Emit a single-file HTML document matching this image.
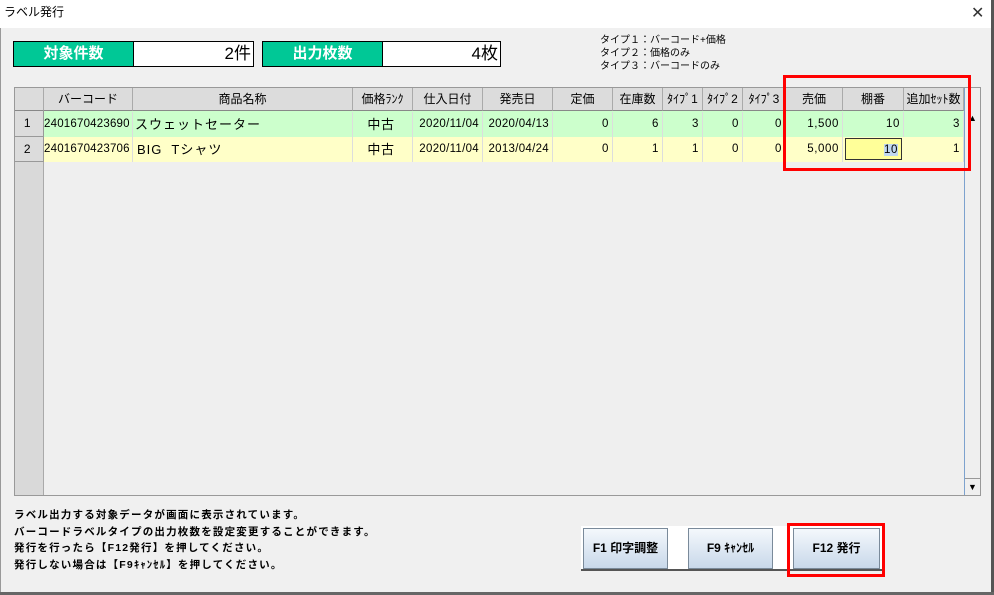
<!DOCTYPE html>
<html><head><meta charset="utf-8"><style>
*{margin:0;padding:0;box-sizing:border-box}
body{width:994px;height:595px;background:#f0f0f0;font-family:"Liberation Sans","Noto Sans CJK JP",sans-serif;position:relative;overflow:hidden;color:#000}
.a{position:absolute}
.title{left:0;top:0;width:994px;height:28px;background:#fff;font-size:12px;line-height:24px;padding-left:4px}
.lbl{background:#00c896;color:#fff;font-weight:bold;font-size:15px;text-align:center;line-height:23px;border:1px solid #000}
.val{background:#fff;border:1px solid #000;border-left:none;text-align:right;font-size:17px;line-height:23px;padding-right:2px}
.legend{font-size:10px;line-height:13px;left:600px;top:34px}
.grid{left:14px;top:87px;width:967px;height:409px;border:1px solid #999;background:#efefef}
.hd{top:88px;height:23px;background:#dcdcdc;border-right:1px solid #aaa;border-bottom:1px solid #888;font-size:12px;text-align:center;line-height:22px;overflow:hidden;white-space:nowrap}
.c{height:25px;font-size:11.5px;line-height:25px;text-align:right;padding-right:3px;border-right:1px solid #ddd;white-space:nowrap;overflow:hidden;letter-spacing:.6px}
.g{background:#ccffcc}.y{background:#ffffc8}
.rn{left:15px;width:29px;background:#dcdcdc;text-align:center;font-size:12px;border-bottom:1px solid #999;border-right:1px solid #999}
.red{border:3px solid #f00}
.help{left:14px;top:507px;font-size:10.5px;line-height:16.5px;font-weight:bold;letter-spacing:1.2px}
.btn{top:528px;height:41px;background:linear-gradient(#f4f8fc,#c8d8ea);border:1px solid #7a8a9a;font-size:12px;font-weight:bold;text-align:center;line-height:39px}
</style></head><body>
<div class="a title">ラベル発行<span class="a" style="left:971px;top:0;font-size:16px;line-height:28px;color:#333">✕</span></div>
<div class="a" style="left:991px;top:0;width:3px;height:595px;background:#555"></div>
<div class="a" style="left:0;top:28px;width:1px;height:567px;background:#999"></div>
<div class="a lbl" style="left:13px;top:41px;width:121px;height:26px">対象件数</div>
<div class="a val" style="left:134px;top:41px;width:120px;height:26px">2件</div>
<div class="a lbl" style="left:262px;top:41px;width:121px;height:26px">出力枚数</div>
<div class="a val" style="left:383px;top:41px;width:118px;height:26px">4枚</div>
<div class="a legend">タイプ１：バーコード+価格<br>タイプ２：価格のみ<br>タイプ３：バーコードのみ</div>
<div class="a grid"></div>
<div class="a" style="left:15px;top:88px;width:29px;height:407px;background:#d9d9d9;border-right:1px solid #aaa"></div>
<div class="a" style="left:964px;top:88px;width:16px;height:407px;background:#efefef;border-left:1px solid #7da2ce"></div>
<div class="a" style="left:965px;top:478px;width:15px;height:16px;font-size:9px;text-align:center;line-height:16px;border-top:1px solid #999">▼</div>
<div class="a" style="left:965px;top:110px;width:15px;height:20px;font-size:9px;text-align:center;line-height:16px">▲</div>
<div class="a hd" style="left:15px;width:29px"></div>
<div class="a hd" style="left:44px;width:89px">バーコード</div>
<div class="a hd" style="left:133px;width:220px">商品名称</div>
<div class="a hd" style="left:353px;width:60px">価格ﾗﾝｸ</div>
<div class="a hd" style="left:413px;width:70px">仕入日付</div>
<div class="a hd" style="left:483px;width:70px">発売日</div>
<div class="a hd" style="left:553px;width:60px">定価</div>
<div class="a hd" style="left:613px;width:50px">在庫数</div>
<div class="a hd" style="left:663px;width:40px">ﾀｲﾌﾟ1</div>
<div class="a hd" style="left:703px;width:40px">ﾀｲﾌﾟ2</div>
<div class="a hd" style="left:743px;width:43px">ﾀｲﾌﾟ3</div>
<div class="a hd" style="left:786px;width:57px">売価</div>
<div class="a hd" style="left:843px;width:61px">棚番</div>
<div class="a hd" style="left:904px;width:60px">追加ｾｯﾄ数</div>

<div class="a c rn" style="top:111px;height:26px">1</div>
<div class="a c rn" style="top:137px;height:25px">2</div>
<div class="a g" style="left:44px;top:111px;width:920px;height:26px"></div>
<div class="a y" style="left:44px;top:137px;width:920px;height:25px"></div>

<div class="a c" style="top:112px;left:44px;width:89px;letter-spacing:.2px">2401670423690</div>
<div class="a c" style="top:112px;left:133px;width:220px;text-align:left;padding-left:2px;font-size:13px;letter-spacing:1px">スウェットセーター</div>
<div class="a c" style="top:112px;left:353px;width:60px;text-align:center;font-size:13px">中古</div>
<div class="a c" style="top:112px;left:413px;width:70px;letter-spacing:.3px">2020/11/04</div>
<div class="a c" style="top:112px;left:483px;width:70px;letter-spacing:.3px">2020/04/13</div>
<div class="a c" style="top:112px;left:553px;width:60px">0</div>
<div class="a c" style="top:112px;left:613px;width:50px">6</div>
<div class="a c" style="top:112px;left:663px;width:40px">3</div>
<div class="a c" style="top:112px;left:703px;width:40px">0</div>
<div class="a c" style="top:112px;left:743px;width:43px">0</div>
<div class="a c" style="top:112px;left:786px;width:57px">1,500</div>
<div class="a c" style="top:112px;left:843px;width:61px">10</div>
<div class="a c" style="top:112px;left:904px;width:60px">3</div>

<div class="a c" style="top:137px;left:44px;width:89px;letter-spacing:.2px">2401670423706</div>
<div class="a c" style="top:137px;left:133px;width:220px;text-align:left;padding-left:4px;font-size:13px;letter-spacing:1px">BIG&nbsp; Tシャツ</div>
<div class="a c" style="top:137px;left:353px;width:60px;text-align:center;font-size:13px">中古</div>
<div class="a c" style="top:137px;left:413px;width:70px;letter-spacing:.3px">2020/11/04</div>
<div class="a c" style="top:137px;left:483px;width:70px;letter-spacing:.3px">2013/04/24</div>
<div class="a c" style="top:137px;left:553px;width:60px">0</div>
<div class="a c" style="top:137px;left:613px;width:50px">1</div>
<div class="a c" style="top:137px;left:663px;width:40px">1</div>
<div class="a c" style="top:137px;left:703px;width:40px">0</div>
<div class="a c" style="top:137px;left:743px;width:43px">0</div>
<div class="a c" style="top:137px;left:786px;width:57px">5,000</div>
<div class="a c" style="top:138px;left:845px;width:57px;height:22px;line-height:22px;background:#ffff99;border:1px solid #333"><span style="background:#c0d8f0">10</span></div>
<div class="a c" style="top:137px;left:904px;width:60px">1</div>

<div class="a red" style="left:783px;top:75px;width:188px;height:96px"></div>

<div class="a help">ラベル出力する対象データが画面に表示されています。<br>バーコードラベルタイプの出力枚数を設定変更することができます。<br>発行を行ったら【F12発行】を押してください。<br>発行しない場合は【F9ｷｬﾝｾﾙ】を押してください。</div>

<div class="a" style="left:581px;top:526px;width:304px;height:45px;background:#fff;border-bottom:2px solid #555"></div>
<div class="a btn" style="left:583px;width:85px">F1 印字調整</div>
<div class="a btn" style="left:688px;width:85px">F9 ｷｬﾝｾﾙ</div>
<div class="a btn" style="left:793px;width:87px">F12 発行</div>
<div class="a red" style="left:787px;top:523px;width:98px;height:54px"></div>
<div class="a" style="left:0;top:592px;width:994px;height:3px;background:#666"></div>
</body></html>
